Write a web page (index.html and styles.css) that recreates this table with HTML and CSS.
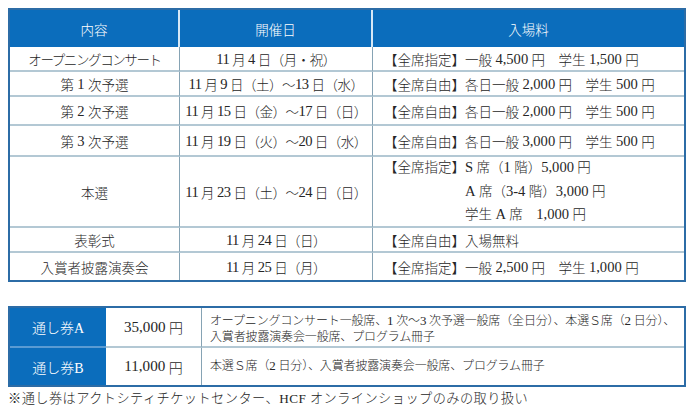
FILE: index.html
```html
<!DOCTYPE html>
<html lang="ja">
<head>
<meta charset="utf-8">
<link rel="stylesheet" href="styles.css">
</head>
<body>
<div class="schedule">
  <div class="hd">内容</div>
  <div class="hd">開催日</div>
  <div class="hd last">入場料</div>

  <div class="c kana r1">オープニングコンサート</div>
  <div class="c date r1"><span class="n">11</span> 月 <span class="n">4</span> 日（月・祝）</div>
  <div class="c r1 price">【全席指定】一般 <span class="n">4,500</span> 円　学生 <span class="n">1,500</span> 円</div>

  <div class="c r2">第 <span class="n">1</span> 次予選</div>
  <div class="c date r2"><span class="n">11</span> 月 <span class="n">9</span> 日（土）～<span class="n">13</span> 日（水）</div>
  <div class="c r2 price">【全席自由】各日一般 <span class="n">2,000</span> 円　学生 <span class="n">500</span> 円</div>

  <div class="c r3">第 <span class="n">2</span> 次予選</div>
  <div class="c date r3"><span class="n">11</span> 月 <span class="n">15</span> 日（金）～<span class="n">17</span> 日（日）</div>
  <div class="c r3 price">【全席自由】各日一般 <span class="n">2,000</span> 円　学生 <span class="n">500</span> 円</div>

  <div class="c r4">第 <span class="n">3</span> 次予選</div>
  <div class="c date r4"><span class="n">11</span> 月 <span class="n">19</span> 日（火）～<span class="n">20</span> 日（水）</div>
  <div class="c r4 price">【全席自由】各日一般 <span class="n">3,000</span> 円　学生 <span class="n">500</span> 円</div>

  <div class="c r5">本選</div>
  <div class="c date r5"><span class="n">11</span> 月 <span class="n">23</span> 日（土）～<span class="n">24</span> 日（日）</div>
  <div class="c r5 price multi">
    <div class="pl">【全席指定】<span class="n">S</span> 席（<span class="n">1</span> 階）<span class="n">5,000</span> 円</div>
    <div class="pl indent"><span class="n">A</span> 席（<span class="n">3-4</span> 階）<span class="n">3,000</span> 円</div>
    <div class="pl indent">学生 <span class="n">A</span> 席　<span class="n">1,000</span> 円</div>
  </div>

  <div class="c r6">表彰式</div>
  <div class="c date r6"><span class="n">11</span> 月 <span class="n">24</span> 日（日）</div>
  <div class="c r6 price">【全席自由】入場無料</div>

  <div class="c r7 end">入賞者披露演奏会</div>
  <div class="c date r7 end"><span class="n">11</span> 月 <span class="n">25</span> 日（月）</div>
  <div class="c r7 end price">【全席指定】一般 <span class="n">2,500</span> 円　学生 <span class="n">1,000</span> 円</div>
</div>

<div class="passes">
  <div class="pname">通し券A</div>
  <div class="pcost"><span class="n">35,000</span> 円</div>
  <div class="pdesc">オープニングコンサート一般席、<span class="n">1</span> 次～<span class="n">3</span> 次予選一般席（全日分）、本選Ｓ席（<span class="n">2</span> 日分）、<br>入賞者披露演奏会一般席、プログラム冊子</div>

  <div class="pname end">通し券B</div>
  <div class="pcost end"><span class="n">11,000</span> 円</div>
  <div class="pdesc end"><span>本選Ｓ席（<span class="n">2</span> 日分）、入賞者披露演奏会一般席、プログラム冊子</span></div>
</div>

<p class="note">※通し券はアクトシティチケットセンター、HCF オンラインショップのみの取り扱い</p>
</body>
</html>
```

FILE: styles.css
```css
* { box-sizing: border-box; }
html, body { margin: 0; padding: 0; background: #ffffff; }
body {
  padding: 8px;
  font-family: "Liberation Serif", "Noto Sans CJK JP", serif;
  font-weight: 300;
  color: #262626;
}

.n { font-size: 1.08em; }

.schedule {
  width: 678px;
  border: 2px solid #2c6ca6;
  display: grid;
  grid-template-columns: 170px 193px 311px;
  grid-template-rows: 37px 25px 25px 29px 31px 71px 25px 27px;
  font-size: 13.5px;
}

.hd {
  background: #0b6dbc;
  color: #ffffff;
  display: flex;
  align-items: center;
  justify-content: center;
  border-right: 2px solid #d6e8f6;
}
.hd.last { border-right: none; }

.c {
  display: flex;
  align-items: center;
  justify-content: center;
  border-bottom: 2px solid #b3c8d4;
  border-right: 1px solid #86a3b4;
  white-space: pre;
  padding-top: 1px;
}
.c.kana { letter-spacing: -1.4px; }
.c.date { letter-spacing: -0.5px; }
.c.price {
  justify-content: flex-start;
  padding-left: 11px;
  border-right: none;
}
.c.end { border-bottom: none; }

.c.multi {
  flex-direction: column;
  align-items: flex-start;
  justify-content: center;
  padding-top: 0;
  white-space: normal;
}
.pl { line-height: 23.5px; white-space: pre; }
.pl.indent { padding-left: 81px; }

.passes {
  margin-top: 24px;
  width: 678px;
  border: 2px solid #2c6ca6;
  display: grid;
  grid-template-columns: 96px 96px 482px;
  grid-template-rows: 40px 37px;
}

.pname {
  background: #0b6dbc;
  color: #ffffff;
  font-size: 14px;
  display: flex;
  align-items: center;
  justify-content: center;
  border-bottom: 2px solid #5a9bd3;
}
.pcost {
  font-size: 14px;
  display: flex;
  align-items: center;
  justify-content: center;
  white-space: pre;
  border-right: 1px solid #86a3b4;
  border-bottom: 2px solid #b3c8d4;
}
.pdesc {
  font-size: 12px;
  line-height: 15.5px;
  letter-spacing: -0.15px;
  display: block;
  padding: 5px 0 0 8px;
  white-space: nowrap;
  border-bottom: 2px solid #b3c8d4;
}
.pname.end, .pcost.end, .pdesc.end { border-bottom: none; }
.pdesc.end { padding-top: 0; display: flex; align-items: center; }

.note {
  margin: 0;
  font-size: 13.2px;
  letter-spacing: 0.45px;
  line-height: 24px;
  white-space: nowrap;
}
```
